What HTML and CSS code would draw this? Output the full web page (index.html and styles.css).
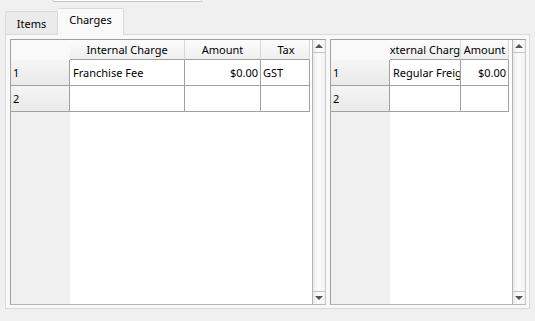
FILE: index.html
```html
<!DOCTYPE html>
<html lang="en">
<head>
  <meta charset="UTF-8" />
  <title>Charges</title>
  <link rel="stylesheet" href="styles.css">
</head>
<body>
  <div class="top-box"></div>

  <div class="tabs">
    <div class="tab">Items</div>
    <div class="tab active">Charges</div>
  </div>

  <div class="pane">
    <!-- internal charges grid -->
    <div class="sheet sheet-left">
      <div class="row-heads">
        <div class="corner"></div>
        <div class="row-head">1</div>
        <div class="row-head">2</div>
      </div>
      <div class="data">
        <div class="head-row">
          <div class="head col-internal">Internal Charge</div>
          <div class="head col-amount">Amount</div>
          <div class="head col-tax">Tax</div>
        </div>
        <div class="row">
          <div class="cell col-internal">Franchise Fee</div>
          <div class="cell col-amount num">$0.00</div>
          <div class="cell col-tax">GST</div>
        </div>
        <div class="row">
          <div class="cell col-internal"></div>
          <div class="cell col-amount"></div>
          <div class="cell col-tax"></div>
        </div>
      </div>
      <div class="scrollbar">
        <div class="btn up"></div>
        <div class="track"></div>
        <div class="btn down"></div>
      </div>
    </div>

    <!-- external charges grid -->
    <div class="sheet sheet-right">
      <div class="row-heads">
        <div class="corner"></div>
        <div class="row-head">1</div>
        <div class="row-head">2</div>
      </div>
      <div class="data">
        <div class="head-row">
          <div class="head col-external">External Charge</div>
          <div class="head col-amount2">Amount</div>
        </div>
        <div class="row">
          <div class="cell col-external">Regular Freight</div>
          <div class="cell col-amount2 num">$0.00</div>
        </div>
        <div class="row">
          <div class="cell col-external"></div>
          <div class="cell col-amount2"></div>
        </div>
      </div>
      <div class="scrollbar">
        <div class="btn up"></div>
        <div class="track"></div>
        <div class="btn down"></div>
      </div>
    </div>
  </div>
</body>
</html>
```

FILE: styles.css
```css
* {
  margin: 0;
  padding: 0;
  box-sizing: border-box;
}

body {
  font-family: 'Noto Sans', 'Open Sans', sans-serif;
  font-size: 11px;
  color: #000;
  background: #f0f0f0;
  width: 535px;
  height: 321px;
  overflow: hidden;
}

/* bottom edge of a control cut off above */
.top-box {
  margin-left: 52px;
  width: 150px;
  height: 2px;
  background: #fff;
  border: 1px solid #c4c4c4;
  border-top: none;
  border-radius: 0 0 3px 3px;
}

/* tab strip */
.tabs {
  display: flex;
  align-items: flex-end;
  padding-left: 5px;
  margin-top: 6px;
  height: 26px;
}
.tab {
  height: 23px;
  width: 53px;
  padding-top: 4px;
  text-align: center;
  background: #ebebeb;
  border: 1px solid #d9d9d9;
  border-bottom: none;
  border-radius: 2px 2px 0 0;
}
.tab.active {
  height: 27px;
  width: 66px;
  margin-bottom: -1px;
  padding-top: 3px;
  background: #f9f9f9;
  border-left: none;
  position: relative;
  z-index: 1;
}

.pane {
  margin-left: 5px;
  width: 525px;
  height: 275px;
  padding: 4px 3px 3px 4px;
  display: flex;
  gap: 4px;
  background: #f9f9f9;
  border: 1px solid #d9d9d9;
}

/* grid widget */
.sheet {
  display: flex;
  height: 266px;
  background: #fff;
  border: 1px solid #a0a0a0;
  border-right-color: #c8c8c8;
  border-bottom-color: #b4b4b4;
}
.sheet-left {
  width: 316px;
}
.sheet-right {
  width: 196px;
}

.row-heads {
  width: 59px;
  flex-shrink: 0;
  background: #f0f0f0;
}
.corner {
  height: 20px;
  background: #f9f9f9;
}
.row-head {
  height: 26px;
  padding-left: 2px;
  display: flex;
  align-items: center;
  background: linear-gradient(#f5f5f5, #eaeaea);
  border-right: 1px solid #a0a0a0;
  border-bottom: 1px solid #a0a0a0;
}

.data {
  flex-shrink: 0;
  background: #fff;
}
.head-row,
.row {
  display: flex;
}
.head {
  height: 20px;
  display: flex;
  align-items: center;
  justify-content: center;
  white-space: nowrap;
  overflow: hidden;
  background: linear-gradient(#fcfcfc, #efefef);
  border-right: 1px solid #d6d6d6;
  border-bottom: 1px solid #a0a0a0;
}
.cell {
  height: 26px;
  padding: 0 2px 0 3px;
  display: flex;
  align-items: center;
  white-space: nowrap;
  overflow: hidden;
  border-right: 1px solid #a0a0a0;
  border-bottom: 1px solid #a0a0a0;
}
.cell.num {
  justify-content: flex-end;
}

.col-internal { width: 115px; }
.col-amount { width: 76px; }
.col-tax { width: 49px; padding-left: 2px; }
.col-external { width: 71px; }
.col-amount2 { width: 48px; }

/* scrollbar */
.scrollbar {
  width: 13px;
  flex-shrink: 0;
  margin-left: auto;
  display: flex;
  flex-direction: column;
  border-left: 1px solid #b4b4b4;
  background: linear-gradient(to right, #e8e8e8, #fbfbfb 40%, #f3f3f3);
}
.btn {
  height: 13px;
  display: flex;
  align-items: center;
  justify-content: center;
}
.btn.up {
  border-bottom: 1px solid #c4c4c4;
}
.btn.down {
  border-top: 1px solid #c4c4c4;
}
.btn::after {
  content: '';
  width: 0;
  height: 0;
  border-left: 4px solid transparent;
  border-right: 4px solid transparent;
}
.btn.up::after {
  border-bottom: 4px solid #555;
}
.btn.down::after {
  border-top: 4px solid #555;
}
.track {
  flex: 1;
}
```
